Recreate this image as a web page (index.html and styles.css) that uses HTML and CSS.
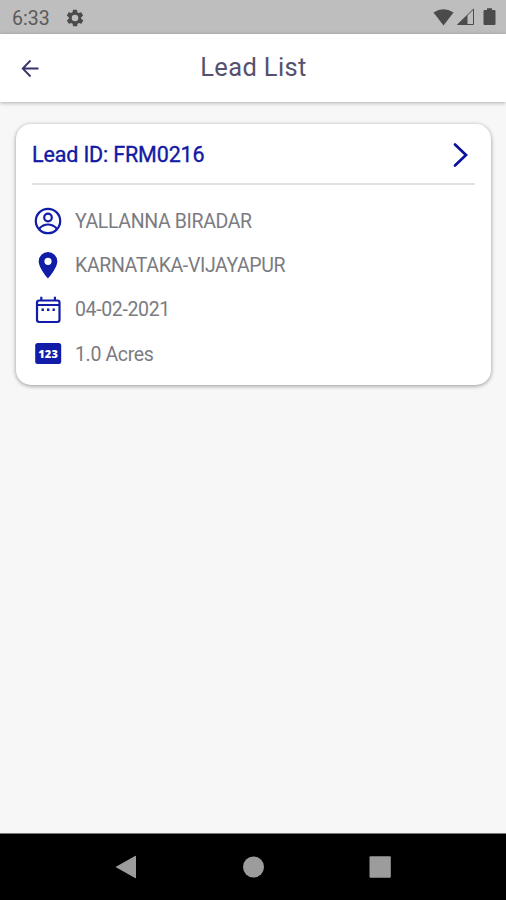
FILE: index.html
```html
<!DOCTYPE html>
<html lang="en">
<head>
<meta charset="utf-8">
<title>Lead List</title>
<link rel="stylesheet" href="styles.css">
</head>
<body>
<div class="screen">
  <div class="status">
    <span class="time">6:33</span>
    <svg class="gear" width="20" height="20" viewBox="0 0 24 24"><path fill-rule="evenodd" d="M19.4 13c.1-.3.1-.7.1-1s0-.7-.1-1l2.1-1.6c.2-.2.3-.4.1-.7l-2-3.400c-.1-.2-.4-.3-.6-.2l-2.500 1c-.5-.4-1.100-.7-1.700-1L14.500 2.400c0-.2-.2-.4-.5-.4h-4c-.3 0-.5.2-.5.4l-.4 2.700c-.6.2-1.200.6-1.700 1l-2.500-1c-.2-.1-.5 0-.6.2l-2 3.400c-.1.300-.1.500.1.700L4.600 11c-.1.300-.1.700-.1 1s0 .7.1 1l-2.100 1.600c-.2.200-.3.400-.1.700l2 3.400c.1.200.4.300.6.200l2.500-1c.5.400 1.100.7 1.700 1l.4 2.700c0 .2.200.4.500.4h4c.3 0 .5-.2.500-.4l.4-2.700c.6-.2 1.200-.6 1.700-1l2.500 1c.2.100.5 0 .6-.2l2-3.400c.1-.3.1-.5-.1-.7zM12 15.900a3.900 3.900 0 1 1 0-7.800 3.900 3.900 0 0 1 0 7.800z"/></svg>
    <svg class="signals" width="64" height="20" viewBox="0 0 64 20"><path d="M.5 4.600Q10.500-2 20.500 4.600L10.500 17.500z"/><path d="M24 17 34.500 7v10z"/><path d="m24.800 16.500 15.700-15.400v15.400z" fill="none" stroke="#4b4b4b"/><path d="M51.500 2H54V.2h5V2h2.500q1 0 1 1v13q0 1-1 1h-10q-1 0-1-1V3q0-1 1-1z"/></svg>
  </div>
  <header class="bar">
    <svg class="back" width="18" height="18" viewBox="0 0 18 18"><path d="M17.500 9.500H2M9.500 1.500 1.700 9.500 9.500 17.500"/></svg>
    <h1>Lead List</h1>
  </header>
  <main>
    <article class="card">
      <div class="head">
        <h2>Lead ID: FRM0216</h2>
        <svg class="next" width="16" height="26" viewBox="0 0 16 26"><path d="M2 2.500 13 13 2 23.500"/></svg>
      </div>
      <ul>
        <li>
          <svg width="28" height="28" viewBox="0 0 28 28"><g class="line"><circle cx="14" cy="14" r="12.200"/><circle cx="14" cy="10.500" r="3.800"/><path d="M5.300 21.500Q9 17.500 14 17.500T22.700 21.500"/></g></svg>
          <span class="name">YALLANNA BIRADAR</span>
        </li>
        <li>
          <svg width="28" height="28" viewBox="0 0 28 28"><path class="fill" fill-rule="evenodd" d="M14 0A9.300 9.300 0 0 0 4.700 9.300C4.700 16.300 14 26.600 14 26.600S23.300 16.300 23.300 9.300A9.300 9.300 0 0 0 14 0zm0 12.900a3.600 3.600 0 1 1 0-7.200 3.600 3.600 0 0 1 0 7.200z"/></svg>
          <span class="place">KARNATAKA-VIJAYAPUR</span>
        </li>
        <li>
          <svg width="28" height="28" viewBox="0 0 28 28"><rect class="line" x="3" y="4.500" width="22.500" height="21.500" rx="2.200"/><path class="line" d="M7.300.8v4M20.900.8v4M3 9h22"/><path class="fill" d="M7.500 12.500h2.400v2.400H7.500zM13 12.500h2.400v2.400H13zM18.500 12.500h2.400v2.400h-2.400z"/></svg>
          <span class="date">04-02-2021</span>
        </li>
        <li>
          <svg width="28" height="28" viewBox="0 0 28 28"><rect class="fill" x="1.200" y="3" width="26" height="21" rx="2.500"/><text class="digits" x="14.200" y="17.500" text-anchor="middle">123</text></svg>
          <span class="area">1.0 Acres</span>
        </li>
      </ul>
    </article>
  </main>
  <nav class="nav">
    <svg width="22" height="24" viewBox="0 0 22 24"><path d="M.5 12 20 1q1-.5 1 .5v21q0 1-1 .5z"/></svg>
    <svg width="22" height="24" viewBox="0 0 22 24"><circle cx="11.500" cy="12" r="10.500"/></svg>
    <svg width="22" height="24" viewBox="0 0 22 24"><rect x=".5" y="1.300" width="21.300" height="21.500" rx="1"/></svg>
  </nav>
</div>
</body>
</html>
```
FILE: styles.css
```css
* { box-sizing: border-box; }
body { margin: 0; font-family: Roboto, "Liberation Sans", sans-serif; background: #f7f7f7; }
svg { display: block; flex: none; overflow: visible; }
h1, h2, ul { margin: 0; padding: 0; }
.screen { width: 506px; height: 900px; display: flex; flex-direction: column; }
.status { height: 34px; flex: none; display: flex; align-items: center; padding: 1px 9px 0 12px; background: #bebebe; color: #5a5a5a; fill: #4b4b4b; }
.time { width: 53px; font-size: 19.500px; line-height: 34px; padding-top: 2px; }
.signals { margin-left: auto; }
.bar { height: 68px; flex: none; display: grid; grid-template-columns: 22px 1fr 22px; align-items: center; padding: 0 21px; background: #fff; box-shadow: 0 1px 4px rgba(0, 0, 0, .3); z-index: 1; }
.back { fill: none; stroke: #37336a; stroke-width: 1.800; }
h1 { font-size: 25.500px; line-height: 30px; font-weight: 400; letter-spacing: .35px; color: #56516e; text-align: center; padding: 0 0 2px 1px; }
main { flex: 1; padding: 22px 15px 0 16px; }
.card { height: 261px; padding: 0 16px; background: #fff; border-radius: 15px; box-shadow: 0 1px 4px rgba(0, 0, 0, .4); }
.head { height: 61px; display: flex; align-items: center; justify-content: space-between; border-bottom: 2px solid #e2e2e2; padding: 2px 6px 0 0; }
h2 { font-size: 21.500px; font-weight: 400; line-height: 28px; letter-spacing: -.15px; color: #1219a5; -webkit-text-stroke: .35px #1219a5; }
.next { fill: none; stroke: #0c12a0; stroke-width: 2.700; stroke-linecap: round; }
ul { list-style: none; padding: 14px 0 0 2px; }
li { height: 44.400px; display: flex; align-items: center; gap: 13px; font-size: 19.500px; letter-spacing: -.36px; color: #7b7b82; }
.line { fill: none; stroke: #111da8; stroke-width: 2.200; }
.fill { fill: #111da8; }
.digits { font: 800 11px "Open Sans", sans-serif; letter-spacing: .2px; fill: #fff; }
.nav { height: 67px; flex: none; display: flex; justify-content: space-between; align-items: center; padding: 0 115px 0 115px; background: #000; border-top: 1px solid #777; fill: #9c9c9c; }
```
